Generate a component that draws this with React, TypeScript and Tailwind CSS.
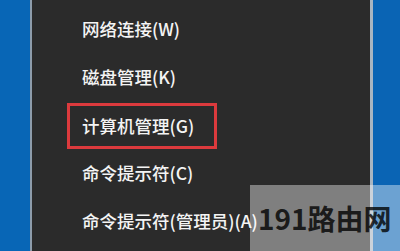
const items = [
  "网络连接(W)",
  "磁盘管理(K)",
  "计算机管理(G)",
  "命令提示符(C)",
  "命令提示符(管理员)(A)",
];

export default function App() {
  return (
    <div
      className="relative flex h-[251px] w-[400px] overflow-hidden bg-[#0063b1]"
      style={{ fontFamily: '"Noto Sans CJK SC", "Noto Sans", sans-serif' }}
    >
      <div className="w-[30px] shrink-0 bg-[#0866b6]" />
      <div className="w-[2px] shrink-0 bg-[#8d9cab]" />
      <div className="flex flex-1 flex-col bg-[#2b2b2b] pt-[5px]">
        {items.map((label, i) => (
          <div key={label} className="flex h-12 items-center">
            {i === 2 ? (
              <div className="ml-[35px] mt-[1px] flex h-[46px] w-[150px] items-center border-[3px] border-[#dc3a3d] pl-[12px]">
                <span className="text-[17.5px] font-medium leading-none text-[#f4f4f4]">{label}</span>
              </div>
            ) : (
              <span className="ml-[50px] text-[17.5px] font-medium leading-none text-[#f4f4f4]">{label}</span>
            )}
          </div>
        ))}
      </div>
      <div className="w-[3px] shrink-0 bg-[#a9b5c1]" />
      <div className="w-[27px] shrink-0 bg-[#0a64b4]" />

      {/* watermark */}
      <div className="absolute left-[250px] top-[185px] flex h-[66px] w-[150px] items-center bg-white/40 pl-[8px]">
        <span className="text-[28px] font-bold leading-none text-black/80">191路由网</span>
      </div>
    </div>
  );
}
